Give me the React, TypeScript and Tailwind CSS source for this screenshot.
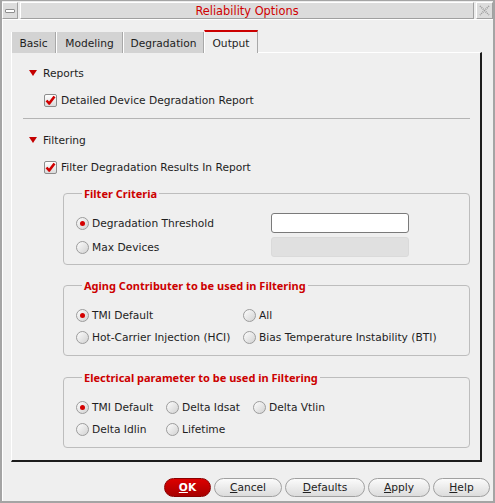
import type { ReactNode } from 'react'

const Triangle = () => (
  <svg width="8" height="6" viewBox="0 0 8 6" className="shrink-0">
    <path d="M0 0 L8 0 L4 6 Z" fill="#c40000" />
  </svg>
)

const Checkbox = () => (
  <span className="w-[13px] h-[13px] shrink-0 rounded-[2px] border border-[#8c8c8c] bg-gradient-to-b from-white to-[#dadada] flex items-center justify-center">
    <svg width="11" height="11" viewBox="0 0 11 11">
      <path d="M1.5 5.5 L4.2 8.5 L9.5 1.5" stroke="#d00000" strokeWidth="2.6" fill="none" strokeLinejoin="round" />
    </svg>
  </span>
)

const Radio = ({ on = false, label }: { on?: boolean; label: string }) => (
  <span className="flex items-center gap-[3px] whitespace-nowrap">
    <span className="w-[13px] h-[13px] shrink-0 rounded-full border border-[#9c9c9c] bg-gradient-to-br from-[#fdfdfd] to-[#d2d2d2] flex items-center justify-center">
      {on && <span className="w-[5px] h-[5px] rounded-full bg-[#d40000]" />}
    </span>
    <span>{label}</span>
  </span>
)

const Group = ({ title, children, className = '' }: { title: string; children: ReactNode; className?: string }) => (
  <fieldset className={`ml-[51px] mr-[10px] border border-[#bdbdbd] rounded-[4px] pl-[12px] ${className}`}>
    <legend className="ml-[6px] px-[2px] font-['Noto_Sans',sans-serif] text-[11px] font-bold text-[#cc0000]">{title}</legend>
    {children}
  </fieldset>
)

const Btn = ({ w, children, primary = false }: { w: string; children: ReactNode; primary?: boolean }) => (
  <button
    className={`${w} h-[19px] rounded-full flex items-center justify-center ${
      primary
        ? 'bg-gradient-to-b from-[#dd0000] to-[#a80000] border border-[#8a0000] text-white font-bold'
        : 'bg-gradient-to-b from-[#fbfbfb] to-[#dcdcdc] border border-[#a0a0a0] text-[#222]'
    }`}
  >
    {children}
  </button>
)

export default function App() {
  const tabs = ['Basic', 'Modeling', 'Degradation']
  const tabW = ['w-[45px]', 'w-[67px]', 'w-[81px]']

  return (
    <div className="w-[495px] h-[503px] bg-[#a4a4a4] px-[2px] pt-[1px] pb-[2px] flex flex-col font-['DejaVu_Sans',sans-serif] text-[10.67px] leading-[15px] text-[#1e1e1e]">
      {/* Title bar */}
      <div className="flex h-[18px] gap-[2px] bg-[#ececec] pt-[1px]">
        <div className="w-[16px] h-[17px] bg-[#dcdcdc] border border-t-white border-l-white border-b-[#a0a0a0] border-r-[#a0a0a0] flex items-center justify-center">
          <span className="w-[10px] h-[4px] rounded-[1px] bg-white border border-[#8e8e8e]" />
        </div>
        <div className="flex-1 h-[17px] bg-[#dcdcdc] border border-t-white border-l-white border-b-[#a0a0a0] border-r-[#a0a0a0] flex items-center justify-center pt-[1px] text-[11.4px] text-[#d00000]">
          Reliability Options
        </div>
        <div className="w-[17px] h-[17px] bg-[#dcdcdc] border border-t-white border-l-white border-b-[#a0a0a0] border-r-[#a0a0a0] flex items-center justify-center">
          <svg width="11" height="11" viewBox="0 0 11 11">
            <path d="M1 1 L10 10 M10 1 L1 10" stroke="#9a9a9a" strokeWidth="1.6" strokeDasharray="1 1" fill="none" />
          </svg>
        </div>
      </div>

      {/* Body */}
      <div className="flex-1 bg-[#efefef] border-l border-t border-white pl-[8px] pt-[11px] flex flex-col">
        {/* Tabs */}
        <div className="flex items-end h-[22px] -mb-px relative z-10">
          {tabs.map((t, i) => (
            <div
              key={t}
              className={`${tabW[i]} h-[21px] bg-[#d3d3d3] border-l border-white border-r border-r-[#a8a8a8] flex items-center justify-center pt-[2px]`}
            >
              {t}
            </div>
          ))}
          <div className="w-[54px] h-[23px] bg-[#efefef] border-t-2 border-[#cc0000] border-l border-l-white border-r border-r-[#a8a8a8] flex items-center justify-center pt-[1px]">
            Output
          </div>
        </div>

        {/* Panel */}
        <div className="w-[471px] h-[410px] border-l border-t border-white border-r-2 border-b-2 border-r-[#1c1c1c] border-b-[#1c1c1c] flex flex-col pt-[12px]">
          <div className="flex items-center gap-[6px] pl-[17px] h-[16px]">
            <Triangle />
            <span>Reports</span>
          </div>
          <div className="flex items-center gap-[4px] pl-[32px] h-[16px] mt-[11px]">
            <Checkbox />
            <span>Detailed Device Degradation Report</span>
          </div>
          <div className="ml-[11px] mr-[10px] mt-[10px] h-px bg-[#b4b4b4]" />
          <div className="flex items-center gap-[6px] pl-[17px] h-[16px] mt-[13px]">
            <Triangle />
            <span>Filtering</span>
          </div>
          <div className="flex items-center gap-[4px] pl-[32px] h-[16px] mt-[11px]">
            <Checkbox />
            <span>Filter Degradation Results In Report</span>
          </div>

          <Group title="Filter Criteria" className="mt-[11px] pt-[11px] pb-[6px]">
            <div className="flex flex-col gap-[2px]">
              <div className="flex items-center h-[22px]">
                <span className="w-[195px]">
                  <Radio on label="Degradation Threshold" />
                </span>
                <span className="w-[138px] h-[20px] bg-white border border-[#7a7a7a] rounded-[3px]" />
              </div>
              <div className="flex items-center h-[22px]">
                <span className="w-[195px]">
                  <Radio label="Max Devices" />
                </span>
                <span className="w-[138px] h-[20px] bg-[#e0e0e0] border border-[#dadada] rounded-[3px]" />
              </div>
            </div>
          </Group>

          <Group title="Aging Contributer to be used in Filtering" className="mt-[13px] pt-[11px] pb-[7px]">
            <div className="grid grid-cols-[167px_1fr]">
              <div className="h-[22px] flex items-center"><Radio on label="TMI Default" /></div>
              <div className="h-[22px] flex items-center"><Radio label="All" /></div>
              <div className="h-[22px] flex items-center"><Radio label="Hot-Carrier Injection (HCI)" /></div>
              <div className="h-[22px] flex items-center"><Radio label="Bias Temperature Instability (BTI)" /></div>
            </div>
          </Group>

          <Group title="Electrical parameter to be used in Filtering" className="mt-[14px] pt-[11px] pb-[7px]">
            <div className="grid grid-cols-[90px_87px_1fr]">
              <div className="h-[22px] flex items-center"><Radio on label="TMI Default" /></div>
              <div className="h-[22px] flex items-center"><Radio label="Delta Idsat" /></div>
              <div className="h-[22px] flex items-center"><Radio label="Delta Vtlin" /></div>
              <div className="h-[22px] flex items-center"><Radio label="Delta Idlin" /></div>
              <div className="h-[22px] flex items-center"><Radio label="Lifetime" /></div>
            </div>
          </Group>
        </div>

        {/* Buttons */}
        <div className="flex justify-end gap-[3px] mt-[16px] pr-[3px]">
          <Btn w="w-[47px]" primary>
            <span><span className="underline">O</span>K</span>
          </Btn>
          <Btn w="w-[68px]">
            <span><span className="underline">C</span>ancel</span>
          </Btn>
          <Btn w="w-[80px]">
            <span><span className="underline">D</span>efaults</span>
          </Btn>
          <Btn w="w-[62px]">
            <span><span className="underline">A</span>pply</span>
          </Btn>
          <Btn w="w-[57px]">
            <span><span className="underline">H</span>elp</span>
          </Btn>
        </div>
      </div>
    </div>
  )
}
